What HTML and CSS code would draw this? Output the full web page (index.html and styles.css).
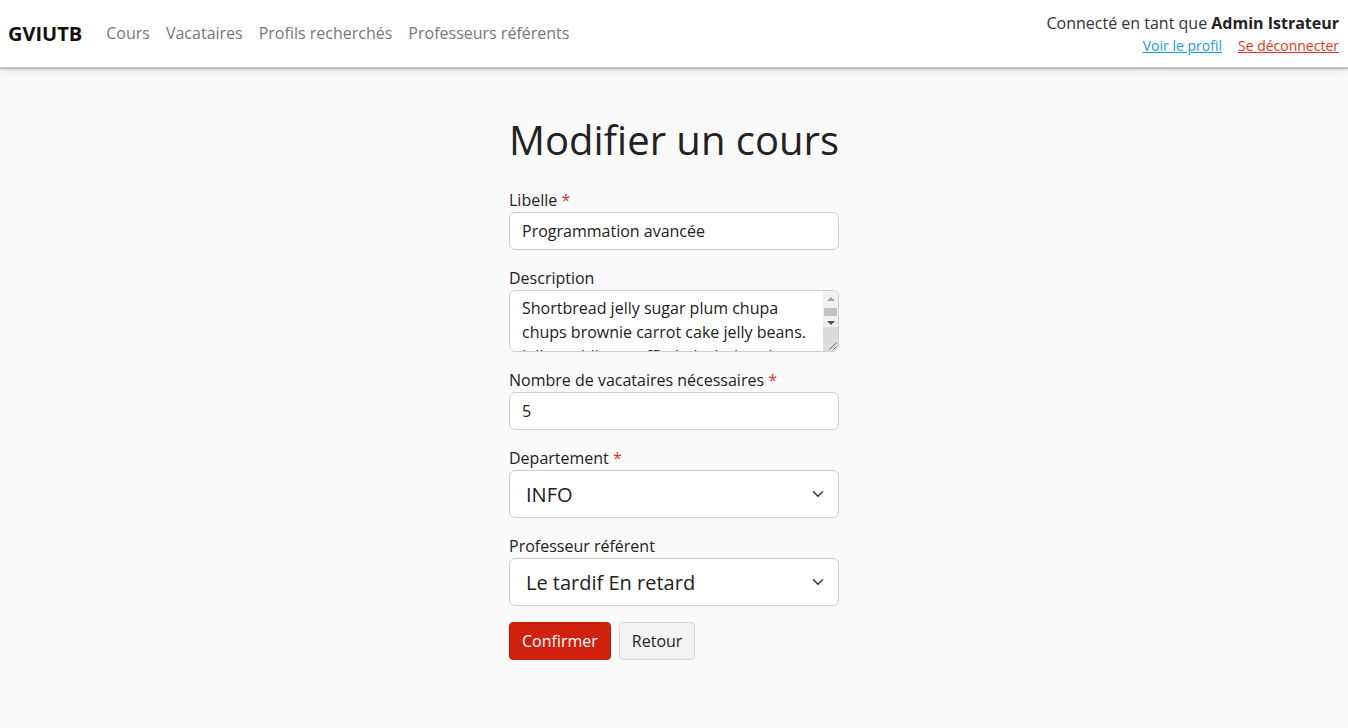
FILE: index.html
```html
<!DOCTYPE html>
<html lang="fr">
<head>
<meta charset="utf-8">
<title>Modifier un cours</title>
<link rel="stylesheet" href="styles.css">
</head>
<body>
<header class="navbar">
  <nav class="nav-left">
    <a class="brand" href="#">GVIUTB</a>
    <a class="nav-link" href="#">Cours</a>
    <a class="nav-link" href="#">Vacataires</a>
    <a class="nav-link" href="#">Profils recherchés</a>
    <a class="nav-link" href="#">Professeurs référents</a>
  </nav>
  <div class="nav-right">
    <div class="user">Connecté en tant que <strong>Admin Istrateur</strong></div>
    <div class="user-links">
      <a class="link-profile" href="#">Voir le profil</a>
      <a class="link-logout" href="#">Se déconnecter</a>
    </div>
  </div>
</header>
<main class="main">
  <form class="form">
    <h1 class="title">Modifier un cours</h1>
    <div class="group">
      <label class="label">Libelle <span class="req">*</span></label>
      <input class="input" type="text" value="Programmation avancée">
    </div>
    <div class="group">
      <label class="label">Description</label>
      <div class="textarea-wrap">
        <textarea class="input textarea">Shortbread jelly sugar plum chupa chups brownie carrot cake jelly beans. Jelly pudding muffin halvah tiramisu marzipan. Cake candy canes lollipop.</textarea>
        <div class="fake-scroll" aria-hidden="true">
          <span class="sb-btn sb-up"><span class="arrow-up"></span></span>
          <span class="sb-track"><span class="sb-thumb"></span></span>
          <span class="sb-btn sb-down"><span class="arrow-down"></span></span>
          <span class="sb-corner">
            <svg width="15" height="15" viewBox="0 0 15 15"><path d="M13.5 6.5L6.5 13.5M13.5 10.5L10.5 13.5" stroke="#6b6b6b" stroke-width="1" fill="none"/></svg>
          </span>
        </div>
      </div>
    </div>
    <div class="group">
      <label class="label">Nombre de vacataires nécessaires <span class="req">*</span></label>
      <input class="input" type="text" value="5">
    </div>
    <div class="group">
      <label class="label">Departement <span class="req">*</span></label>
      <select class="select"><option>INFO</option></select>
    </div>
    <div class="group">
      <label class="label">Professeur référent</label>
      <select class="select"><option>Le tardif En retard</option></select>
    </div>
    <div class="actions">
      <button type="button" class="btn btn-primary">Confirmer</button>
      <button type="button" class="btn btn-light">Retour</button>
    </div>
  </form>
</main>
</body>
</html>
```
FILE: styles.css
```css
* { box-sizing: border-box; }
html, body { margin: 0; padding: 0; }
body {
  font-family: "Open Sans", "Liberation Sans", sans-serif;
  background: #fafafa;
  color: #222;
  min-height: 728px;
}
.navbar {
  height: 68px;
  background: #fff;
  display: flex;
  justify-content: space-between;
  align-items: flex-start;
  padding: 0 9px 0 8px;
  box-shadow: 0 1px 2px rgba(0,0,0,0.3), 0 3px 8px rgba(0,0,0,0.08);
  border-bottom: 1px solid #c4c4c4;
  position: relative;
}
.nav-left {
  display: flex;
  align-items: center;
  gap: 16px;
  height: 66px;
}
.brand {
  font-weight: 700;
  font-size: 20px;
  color: #111;
  text-decoration: none;
  margin-right: 8px;
}
.nav-link {
  font-size: 16px;
  color: #777;
  text-decoration: none;
}
.nav-right {
  display: flex;
  flex-direction: column;
  align-items: flex-end;
  padding-top: 11px;
}
.user {
  font-size: 16px;
  line-height: 24px;
  color: #333;
}
.user strong { color: #222; font-weight: 700; }
.user-links {
  display: flex;
  gap: 16px;
  font-size: 14px;
  line-height: 22px;
}
.link-profile { color: #1a9cd8; }
.link-logout { color: #e3341b; }
.main {
  display: flex;
  justify-content: center;
  padding-top: 48px;
}
.form {
  width: 330px;
  display: flex;
  flex-direction: column;
  gap: 16px;
}
.title {
  font-size: 40px;
  font-weight: 400;
  line-height: 48px;
  margin: 0 0 8px;
  color: #222;
  white-space: nowrap;
}
.group {
  display: flex;
  flex-direction: column;
}
.label {
  font-size: 16px;
  line-height: 24px;
  color: #222;
}
.req { color: #d9372b; }
.input {
  font-family: inherit;
  font-size: 16px;
  color: #222;
  height: 38px;
  border: 1px solid #cfcfcf;
  border-radius: 6px;
  background: #fff;
  padding: 6px 12px;
  line-height: 24px;
  outline: none;
}
.textarea-wrap {
  position: relative;
  display: flex;
  flex-direction: column;
}
.textarea {
  height: 62px;
  resize: none;
  overflow: hidden;
  padding: 5px 28px 5px 12px;
}
.fake-scroll {
  position: absolute;
  top: 1px;
  right: 1px;
  bottom: 1px;
  width: 15px;
  display: flex;
  flex-direction: column;
  background: #f1f1f1;
  border-radius: 0 5px 5px 0;
  overflow: hidden;
}
.sb-btn {
  display: flex;
  align-items: center;
  justify-content: center;
}
.sb-up { height: 14px; padding-top: 2px; }
.sb-down { height: 9px; }
.sb-track {
  height: 13px;
  display: flex;
  flex-direction: column;
  padding: 3px 1px 2px;
}
.sb-thumb {
  flex: 1;
  background: #c1c1c1;
}
.arrow-up {
  width: 0; height: 0;
  border-left: 4px solid transparent;
  border-right: 4px solid transparent;
  border-bottom: 4px solid #a3a3a3;
}
.arrow-down {
  width: 0; height: 0;
  border-left: 4px solid transparent;
  border-right: 4px solid transparent;
  border-top: 4px solid #505050;
}
.sb-corner {
  flex: 1;
  background: #dcdcdc;
  display: flex;
  align-items: flex-end;
  justify-content: flex-end;
}
.sb-corner svg { display: block; }
.select {
  font-family: inherit;
  font-size: 20px;
  color: #222;
  height: 48px;
  border: 1px solid #cfcfcf;
  border-radius: 6px;
  padding: 0 16px;
  appearance: none;
  -webkit-appearance: none;
  background: #fff url("data:image/svg+xml;utf8,<svg xmlns='http://www.w3.org/2000/svg' width='16' height='16' viewBox='0 0 16 16'><path fill='none' stroke='%23343a40' stroke-linecap='round' stroke-linejoin='round' stroke-width='2' d='M2 5l6 6 6-6'/></svg>") no-repeat right 14px center / 12px 12px;
  outline: none;
}
.actions {
  display: flex;
  gap: 8px;
}
.btn {
  font-family: inherit;
  font-size: 16px;
  height: 38px;
  padding: 0 12px;
  border-radius: 4px;
  cursor: pointer;
}
.btn-primary {
  background: #d0210f;
  border: 1px solid #c21d0c;
  color: #fff;
}
.btn-light {
  background: #f3f3f3;
  border: 1px solid #d8d8d8;
  color: #222;
}
```
